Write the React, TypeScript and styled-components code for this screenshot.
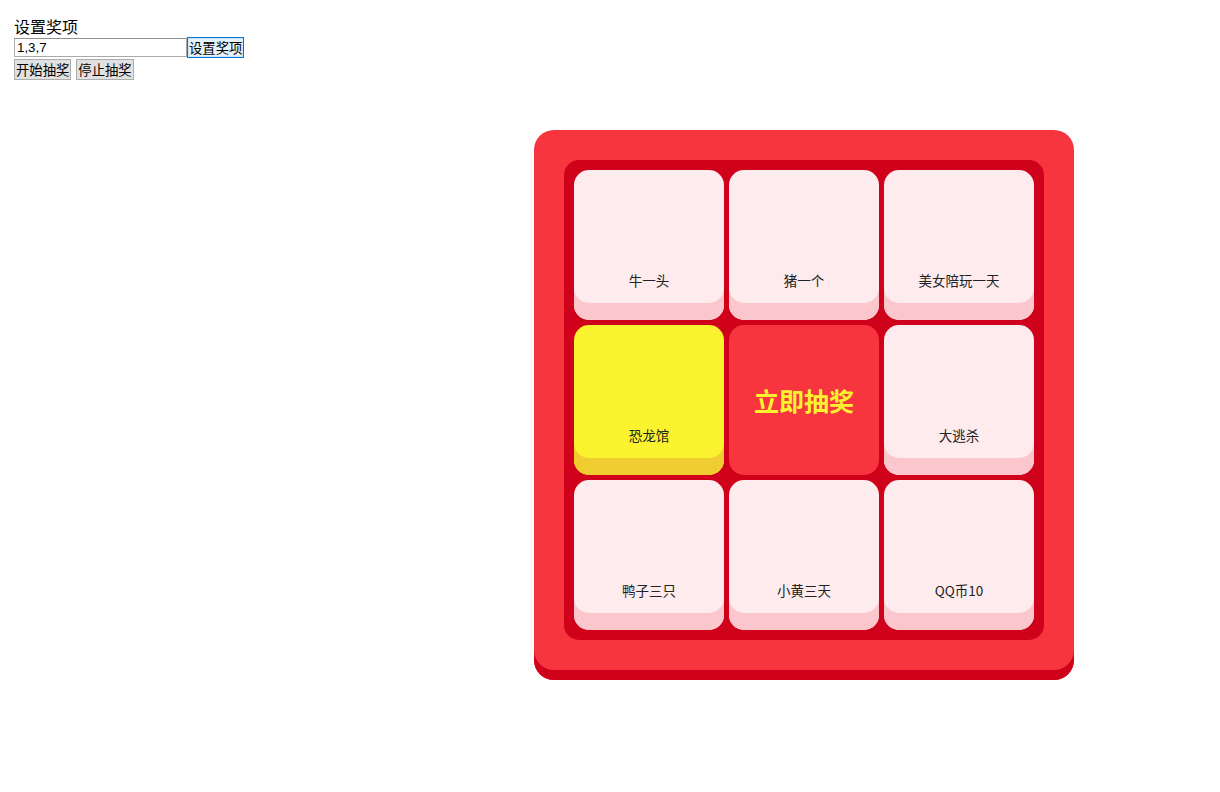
import React from "react";
import styled, { createGlobalStyle } from "styled-components";

const Global = createGlobalStyle`
  html, body { margin: 0; padding: 0; background: #ffffff; }
  body { font-family: "Noto Sans CJK SC", "Noto Sans", sans-serif; color: #000; }
`;

const Page = styled.div`
  padding: 15px 0 0 14px;
`;

const Controls = styled.div`
  display: flex;
  flex-direction: column;
  align-items: flex-start;
`;

const Label = styled.div`
  font-size: 16px;
  line-height: 22px;
  height: 22px;
`;

const Row = styled.div<{ $gap?: number; $top?: number }>`
  display: flex;
  align-items: center;
  gap: ${(p) => p.$gap ?? 0}px;
  height: 21px;
  margin-top: ${(p) => p.$top ?? 0}px;
`;

const TextInput = styled.input`
  box-sizing: border-box;
  width: 173px;
  height: 19px;
  margin: 0;
  padding: 0 2px;
  border: 1px solid #a9a9a9;
  border-top-color: #8f8f8f;
  font-family: "Liberation Sans", Arial, sans-serif;
  font-size: 13.33px;
  color: #000;
  outline: none;
`;

const Btn = styled.button<{ $focus?: boolean }>`
  box-sizing: border-box;
  height: 21px;
  margin: 0;
  padding: 0 1px;
  font-family: "Noto Sans CJK SC", sans-serif;
  font-size: 13.33px;
  line-height: 17px;
  color: #000;
  background: ${(p) => (p.$focus ? "#e5f1fb" : "#e1e1e1")};
  border: 1px solid ${(p) => (p.$focus ? "#0078d7" : "#adadad")};
  border-radius: 0;
  box-shadow: ${(p) => (p.$focus ? "inset 0 0 0 1px #cde4f7" : "none")};
  cursor: default;
`;

const Board = styled.div`
  box-sizing: border-box;
  margin: 50px 0 0 520px;
  width: 540px;
  height: 550px;
  padding: 30px;
  border-radius: 20px;
  background: #f6353f;
  box-shadow: inset 0 -10px 0 #d0021b;
`;

const Grid = styled.div`
  box-sizing: border-box;
  width: 480px;
  height: 480px;
  padding: 10px;
  border-radius: 15px;
  background: #d0021b;
  display: grid;
  grid-template-columns: repeat(3, 150px);
  grid-template-rows: repeat(3, 150px);
  gap: 5px;
`;

const Cell = styled.div<{ $active?: boolean }>`
  box-sizing: border-box;
  border-radius: 15px;
  background: ${(p) => (p.$active ? "#fbf32f" : "#fdebed")};
  box-shadow: inset 0 -17px 0 ${(p) => (p.$active ? "#f0cd30" : "#fbc6cc")};
  display: flex;
  flex-direction: column;
  justify-content: flex-end;
  align-items: center;
  padding-bottom: 30px;
  font-size: 13.5px;
  line-height: 20px;
  color: #222;
`;

const StartButton = styled.div`
  border-radius: 15px;
  background: #f6353f;
  display: flex;
  align-items: center;
  justify-content: center;
  color: #fbf32f;
  font-size: 25px;
  font-weight: 700;
  cursor: pointer;
`;

const prizes = [
  "牛一头",
  "猪一个",
  "美女陪玩一天",
  "恐龙馆",
  null,
  "大逃杀",
  "鸭子三只",
  "小黄三天",
  "QQ币10",
];

export default function App() {
  return (
    <Page>
      <Global />
      <Controls>
        <Label>设置奖项</Label>
        <Row>
          <TextInput defaultValue="1,3,7" />
          <Btn $focus>设置奖项</Btn>
        </Row>
        <Row $gap={5} $top={1}>
          <Btn>开始抽奖</Btn>
          <Btn>停止抽奖</Btn>
        </Row>
      </Controls>
      <Board>
        <Grid>
          {prizes.map((p, i) =>
            p === null ? (
              <StartButton key={i}>立即抽奖</StartButton>
            ) : (
              <Cell key={i} $active={i === 3}>
                {p}
              </Cell>
            )
          )}
        </Grid>
      </Board>
    </Page>
  );
}
